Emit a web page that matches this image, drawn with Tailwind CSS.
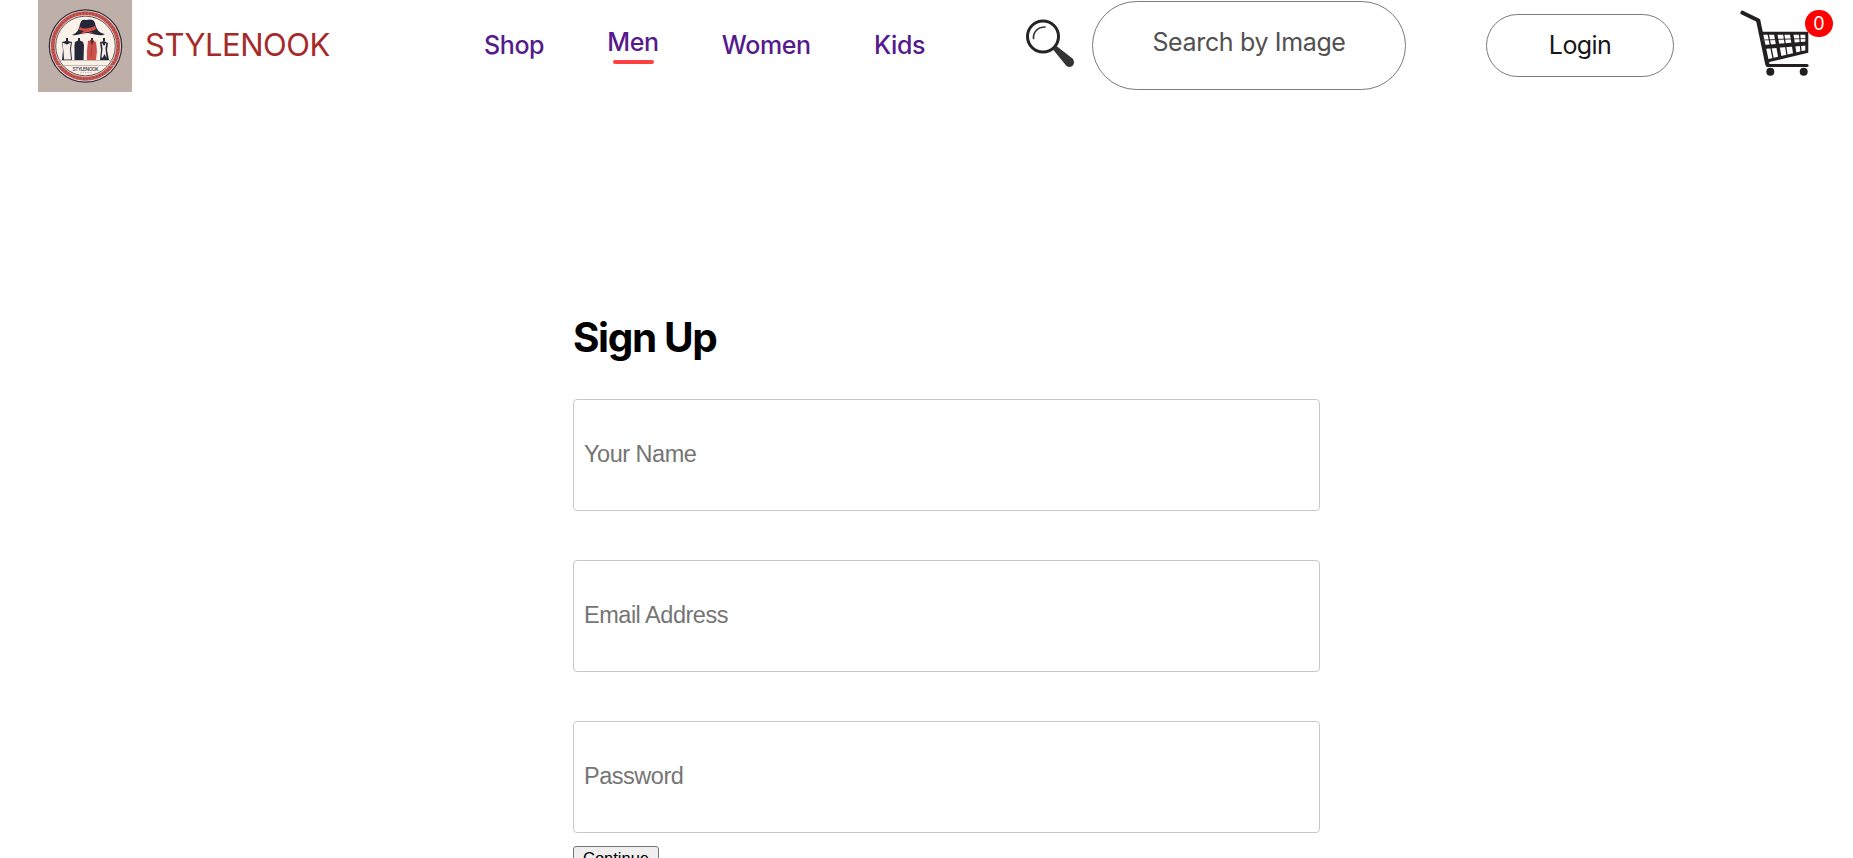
<!DOCTYPE html>
<html lang="en">
<head>
<meta charset="utf-8">
<title>Stylenook</title>
<script src="https://cdn.jsdelivr.net/npm/@tailwindcss/browser@4"></script>
</head>
<body class="bg-white font-['Inter',sans-serif] h-[858px] overflow-hidden">
<header class="flex h-[92px]">
  <svg class="ml-[38px] w-[94px] h-[92px] shrink-0" viewBox="0 0 94 92">
    <rect width="94" height="92" fill="#beafa8"/>
    <circle cx="47.500" cy="46" r="36.800" fill="#29293b"/>
    <circle cx="47.500" cy="46" r="35.600" fill="#e9d9d0"/>
    <circle cx="47.500" cy="46" r="32.800" fill="none" stroke="#c9554e" stroke-width="3.800"/>
    <circle cx="47.500" cy="46" r="32.800" fill="none" stroke="#87414a" stroke-width="2.400" stroke-dasharray="1 2.300" opacity=".7"/>
    <circle cx="47.500" cy="46" r="29.800" fill="#faf2e9" stroke="#3c3540" stroke-width=".8"/>
    <path d="M34 35c5-2 7-5 8-11 1-4 3-5 6-4 4-1 8-1 9 3 1 6 4 10 10 11-4 3-10 0-17-1-6 0-10 3-16 2z" fill="#24263a"/>
    <path d="M42 27c5 3 10 1 15-1l1 3c-3 2-5 2-7 2l6 3-7-2-8 2 4-3-5-1z" fill="#d94f48"/>
    <g fill="#24263a">
      <path d="M28 38h2v3h-2zM40 38h2v3h-2zM53 38h2v3h-2zM65 38h2v3h-2z"/>
      <path d="M24 42l4-1 2 0 4 1-1 7 1 11H24l1-10z"/>
      <path d="M37 42l4-2 4 2 1 3-.5 15h-9l0-15z"/>
      <path d="M62 42l4-1 4 2-1 7 2 10h-9l1-10z"/>
    </g>
    <path d="M24.500 42.500l4.500 2 4-2-1 6 1 11h-7l-.5-8z" fill="#f6eee6"/>
    <path d="M63.500 42l2.500 4 2.500-4-1 6 1 10-2-4-2 4-1-1 1-8z" fill="#f6eee6"/>
    <path d="M50 41l4-1 4 2 1 9-1 9h-9l0-9z" fill="#cf504b"/>
    <path d="M52.500 40.500l1.500 5 1.500-5zM54 47l-1 10" fill="#24263a" stroke="#803944" stroke-width=".7"/>
    <path d="M19 60.500h57M19 65.500h57" stroke="#b4aaa5" stroke-width=".8"/>
    <text x="34.500" y="71.300" font-family="Inter" font-size="4.800" font-weight="500" fill="#30303f" textLength="26">STYLENOOK</text>
    <path d="M42 72.700h12" stroke="#aaa09c" stroke-width=".7" stroke-dasharray="1.500 1"/>
  </svg>
  <p class="ml-[13px] mt-[21px] w-[186px] shrink-0 text-[31px] leading-[48px] tracking-[-0.5px] text-[#a52a2a] whitespace-nowrap">STYLENOOK</p>
  <nav class="ml-[153px] flex h-[90px] w-[441px] shrink-0 items-center justify-between text-[25px] leading-[30px] tracking-[-0.4px] font-medium text-[#551a8b]">
    <a>Shop</a>
    <a class="flex flex-col items-center gap-[3px] pt-[1px]"><span>Men</span><span class="h-1 w-[41px] rounded-[10px] bg-[#ff4141]"></span></a>
    <a>Women</a>
    <a>Kids</a>
  </nav>
  <svg class="ml-[100px] mt-[18px] h-[50px] w-[50px] shrink-0" viewBox="0 0 50 50">
    <circle cx="18" cy="18.500" r="15.500" fill="none" stroke="#242424" stroke-width="3"/>
    <path d="M8.500 20.500c-.5-6 4-11.500 11.500-11.500" fill="none" stroke="#333" stroke-width="1.700" stroke-linecap="round"/>
    <path d="M28 31.500l3.500-3.500 16 12.500c4 5-1 11-6 7.500z" fill="#333"/>
  </svg>
  <button class="ml-[17px] mt-px h-[89px] w-[314px] shrink-0 rounded-[45px] border border-[#7a7a7a] pb-[5px] text-[25px] tracking-[-0.35px] text-[#515151]">Search by Image</button>
  <button class="ml-[80px] mt-[14px] h-[63px] w-[188px] shrink-0 rounded-[32px] border border-[#7a7a7a] text-[25px] tracking-[-0.6px] text-[#171717]">Login</button>
  <div class="relative ml-[66px] mt-[10px] h-[67px] w-[94px] shrink-0">
    <svg class="h-[67px] w-[94px]" viewBox="0 0 94 67" fill="none" stroke="#231f20">
      <path d="M2.500 2.700L18 10.300" stroke-width="4" stroke-linecap="round"/>
      <path d="M18 9.500L27.500 55" stroke-width="4.200"/>
      <path d="M27.500 55.500H67" stroke-width="3.200" stroke-linecap="round"/>
      <path d="M21 23.200H66.800V41.500L27 51" stroke-width="3"/>
      <path d="M23 37L67 33.500" stroke-width="4"/>
      <path d="M22 30L66 28.500" stroke-width="1.200" stroke="#555"/>
      <path d="M35.500 23L40 48M51.500 23L55 45" stroke-width="3.400"/>
      <path d="M28 23L33 48M43.500 23L47 45M59.500 23L61 42" stroke-width="1.300"/>
      <g fill="#231f20" stroke="none"><circle cx="30.300" cy="61.700" r="4"/><circle cx="63.700" cy="61.700" r="4"/></g>
    </svg>
    <span class="absolute left-[65px] top-0 flex h-[27px] w-[28px] items-center justify-center rounded-full bg-[#ff0000] text-[18px] text-white">0</span>
  </div>
</header>
<main class="ml-[573px] mt-[219px] flex w-[747px] flex-col items-start">
  <h1 class="h-[88px] text-[40.500px] font-bold leading-[54px] tracking-[-1.400px] text-black">Sign Up</h1>
  <div class="flex w-full flex-col gap-[49px]">
    <input placeholder="Your Name" class="h-[112px] w-full rounded-[4px] border border-[#c9c9c9] px-[10px] pb-[2px] font-['Liberation_Sans',sans-serif] text-[23.500px] tracking-[-0.480px] placeholder:text-[#757575]">
    <input placeholder="Email Address" class="h-[112px] w-full rounded-[4px] border border-[#c9c9c9] px-[10px] pb-[2px] font-['Liberation_Sans',sans-serif] text-[23.500px] tracking-[-0.480px] placeholder:text-[#757575]">
    <input placeholder="Password" class="h-[112px] w-full rounded-[4px] border border-[#c9c9c9] px-[10px] pb-[2px] font-['Liberation_Sans',sans-serif] text-[23.500px] tracking-[-0.480px] placeholder:text-[#757575]">
  </div>
  <button class="mt-[13px] flex h-[26px] w-[86px] items-center justify-center rounded-[3px] border border-[#767676] bg-[#efefef] pb-px font-['Liberation_Sans',sans-serif] text-[16.500px] text-black">Continue</button>
</main>
</body>
</html>
